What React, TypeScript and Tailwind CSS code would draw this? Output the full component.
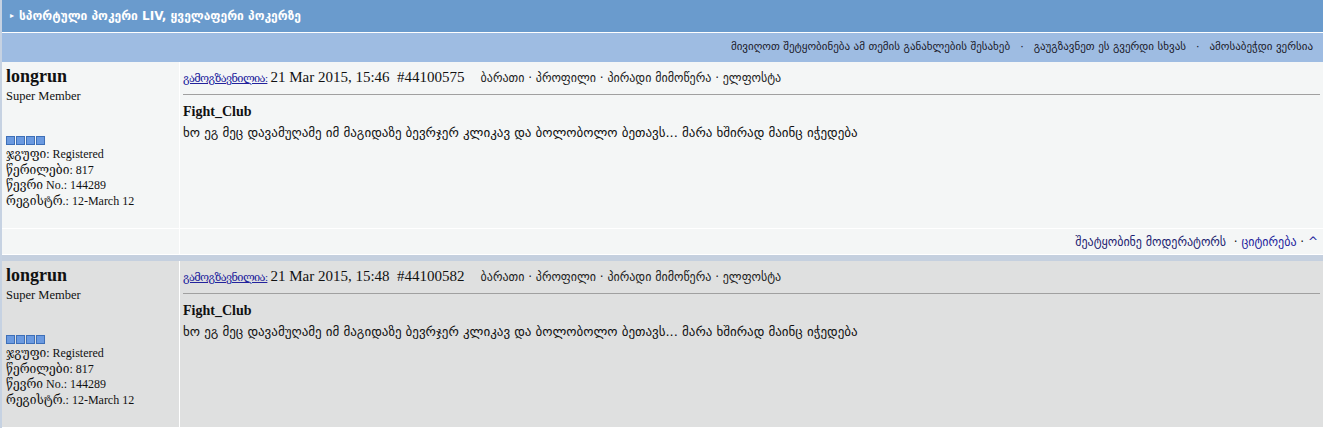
import React from 'react';

// ფორუმის თემის გვერდი: სათაური, ქვედა ზოლი და პოსტები
const SERIF = "font-['Liberation_Serif','DejaVu_Serif',serif]";
const SANS = "font-['DejaVu_Sans','Liberation_Sans',sans-serif]";

interface Post {
  id: string;
  time: string;
  bg: string;
}

const POSTS: Post[] = [
  { id: '44100575', time: '21 Mar 2015, 15:46', bg: 'bg-[#f4f6f6]' },
  { id: '44100582', time: '21 Mar 2015, 15:48', bg: 'bg-[#dfe0e0]' },
];

function Pips() {
  return (
    <div className="flex gap-px mt-[33px]">
      {[0, 1, 2, 3].map((i) => (
        <span key={i} className="w-[9px] h-[9px] bg-[#6b9ae0] border border-[#3d6fb8]" />
      ))}
    </div>
  );
}

function PostBlock({ post, withFooter }: { post: Post; withFooter: boolean }) {
  return (
    <div className={`${post.bg} border-b border-white`}>
      <div className="flex h-[166px]">
        <div className={`w-[178px] shrink-0 border-r border-white pl-[4px] pt-[4px] text-[#111] ${SERIF}`}>
          <div className="text-[18px] font-bold leading-[20px]">longrun</div>
          <div className="text-[12.5px] leading-[14px] mt-[3px]">Super Member</div>
          <Pips />
          <div className="text-[12px] leading-[15.5px] mt-[2px]">
            <div>ჯგუფი: Registered</div>
            <div>წერილები: 817</div>
            <div>წევრი No.: 144289</div>
            <div>რეგისტრ.: 12-March 12</div>
          </div>
        </div>
        <div className="flex-1 pl-[3px] pr-[3px] pt-[4px]">
          <div className={`flex items-baseline text-[15px] text-[#111] ${SERIF}`}>
            <a className="text-[#22229c] underline text-[11px] tracking-[-0.6px]">გამოგზავნილია:</a>
            <span className="ml-[3px] whitespace-pre">{post.time}  #{post.id}</span>
            <span className={`ml-[16px] text-[12px] text-[#222] ${SANS}`}>
              ბარათი · პროფილი · პირადი მიმოწერა · ელფოსტა
            </span>
          </div>
          <div className="h-px bg-[#a0a0a0] mt-[5px]" />
          <div className={`text-[14px] font-bold text-[#111] mt-[8px] leading-[18px] ${SERIF}`}>Fight_Club</div>
          <div className={`text-[13px] text-[#111] mt-[2px] ${SANS}`}>
            ხო ეგ მეც დავამუღამე იმ მაგიდაზე ბევრჯერ კლიკავ და ბოლობოლო ბეთავს... მარა ხშირად მაინც იჭედება
          </div>
        </div>
      </div>
      {withFooter && (
        <div className="flex h-[26px] border-t border-white">
          <div className="w-[178px] shrink-0 border-r border-white" />
          <div className={`flex-1 flex items-center justify-end pr-[5px] text-[12px] text-[#111] ${SANS}`}>
            <a className="text-[#1c1c70]">შეატყობინე მოდერატორს</a>
            <span className="whitespace-pre">  · </span>
            <a className="text-[#22229c]">ციტირება</a>
            <span className="whitespace-pre"> · </span>
            <a className="text-[#22229c]">^</a>
          </div>
        </div>
      )}
    </div>
  );
}

export default function App() {
  return (
    <div className="w-[1323px] h-[429px] overflow-hidden bg-white">
      <div className="border-l-2 border-[#c6d2e2]">
        <div className={`h-[33px] bg-[#6a9bcd] border-b border-white flex items-center pl-[8px] text-white text-[12px] font-bold ${SANS}`}>
          <span className="text-[8px] mr-[5px]">▸</span>
          <span>სპორტული პოკერი LIV, ყველაფერი პოკერზე</span>
        </div>
        <div className={`h-[29px] bg-[#9ebce2] flex items-center justify-end pr-[10px] text-[11px] text-[#1a1a2a] ${SANS}`}>
          <span>მივიღოთ შეტყობინება ამ თემის განახლების შესახებ</span>
          <span className="mx-[10px]">·</span>
          <span>გაუგზავნეთ ეს გვერდი სხვას</span>
          <span className="mx-[10px]">·</span>
          <span>ამოსაბეჭდი ვერსია</span>
        </div>
        <PostBlock post={POSTS[0]} withFooter />
        <div className="h-[6px] bg-[#c5d0df]" />
        <PostBlock post={POSTS[1]} withFooter={false} />
      </div>
    </div>
  );
}
